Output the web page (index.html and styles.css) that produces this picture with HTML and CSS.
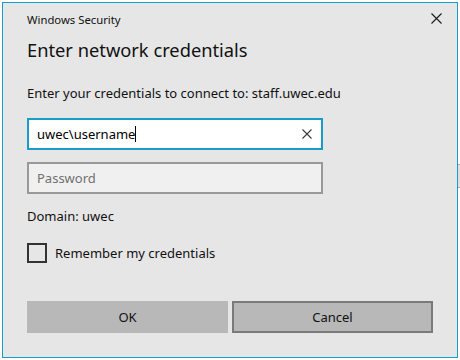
FILE: index.html
```html
<!DOCTYPE html>
<html>
<head>
<meta charset="utf-8">
<link rel="stylesheet" href="styles.css">
</head>
<body>
<div class="backdrop-peek"></div>
<div class="dialog">
  <div class="header">
    <span class="app-name">Windows Security</span>
    <span class="close">
      <svg width="11" height="11" viewBox="0 0 11 11"><path d="M0.5 0.5L10.5 10.5M10.5 0.5L0.5 10.5" stroke="#1a1a1a" stroke-width="1.1" fill="none"/></svg>
    </span>
  </div>
  <div class="title">Enter network credentials</div>
  <div class="prompt">Enter your credentials to connect to: staff.uwec.edu</div>
  <div class="field field-active">
    <span class="value">uwec\username</span><span class="caret"></span>
    <span class="clear">
      <svg width="10" height="10" viewBox="0 0 10 10"><path d="M0.5 0.5L9.5 9.5M9.5 0.5L0.5 9.5" stroke="#3a3a3a" stroke-width="1.1" fill="none"/></svg>
    </span>
  </div>
  <div class="field field-idle">
    <span class="placeholder">Password</span>
  </div>
  <div class="domain">Domain: uwec</div>
  <label class="remember">
    <span class="box"></span>
    <span class="remember-text">Remember my credentials</span>
  </label>
  <div class="buttons">
    <div class="btn btn-ok">OK</div>
    <div class="btn btn-cancel">Cancel</div>
  </div>
</div>
</body>
</html>
```

FILE: styles.css
```css
html, body {
  margin: 0;
  padding: 0;
  background: #ffffff;
}
body {
  width: 460px;
  height: 360px;
  position: relative;
  overflow: hidden;
  font-family: "Noto Sans", "Open Sans", sans-serif;
  color: #111111;
}
.backdrop-peek {
  position: absolute;
  left: 456px;
  top: 164px;
  width: 10px;
  height: 24px;
  background: #e1e1e1;
  border: 1px solid #adadad;
  box-sizing: border-box;
}
.dialog {
  position: relative;
  margin: 2px 0 0 2px;
  width: 456px;
  height: 356px;
  box-sizing: border-box;
  border: 1px solid #1a9cc8;
  background: #e6e6e6;
  padding: 0 24px;
  display: flex;
  flex-direction: column;
}
.header {
  height: 31px;
  display: flex;
  align-items: center;
  justify-content: space-between;
  padding-top: 1px;
  box-sizing: border-box;
}
.app-name {
  font-size: 11.3px;
}
.close {
  display: flex;
  margin-right: -9px;
  margin-top: -2px;
}
.title {
  font-size: 18.3px;
  line-height: 24px;
  margin-top: 4px;
}
.prompt {
  font-size: 13px;
  line-height: 18px;
  margin-top: 22px;
}
.field {
  width: 296px;
  height: 32px;
  box-sizing: border-box;
  display: flex;
  align-items: center;
  padding: 0 8px;
  font-size: 13px;
  position: relative;
}
.field-active {
  margin-top: 16px;
  background: #ffffff;
  border: 2px solid #1a9cc8;
}
.field-idle {
  margin-top: 12px;
  background: #f0f0f0;
  border: 2px solid #999999;
}
.value {
  color: #000;
}
.caret {
  display: inline-block;
  width: 1px;
  height: 16px;
  background: #000;
}
.clear {
  position: absolute;
  right: 9px;
  top: 9px;
  display: flex;
}
.placeholder {
  color: #707070;
}
.domain {
  font-size: 13px;
  line-height: 18px;
  margin-top: 13px;
}
.remember {
  display: flex;
  align-items: center;
  margin-top: 18px;
  font-size: 13px;
}
.box {
  width: 20px;
  height: 20px;
  box-sizing: border-box;
  border: 2px solid #333333;
  margin-right: 8px;
}
.buttons {
  display: flex;
  gap: 4px;
  margin-top: 38px;
}
.btn {
  width: 201px;
  height: 32px;
  box-sizing: border-box;
  background: #b8b8b8;
  display: flex;
  align-items: center;
  justify-content: center;
  font-size: 13px;
}
.btn-cancel {
  border: 2px solid #7a7a7a;
}
```
